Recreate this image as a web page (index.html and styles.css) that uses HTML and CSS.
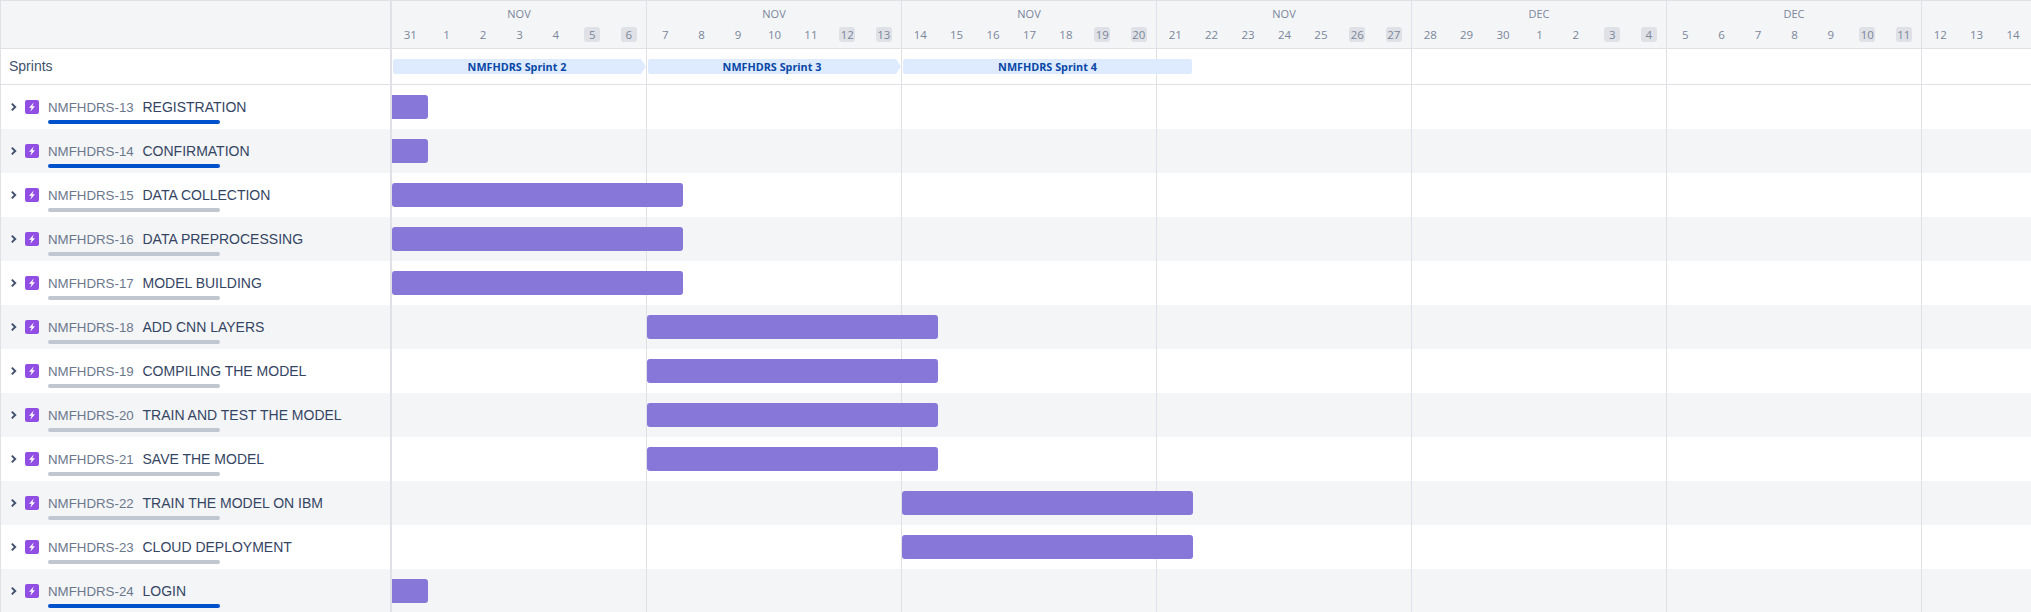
FILE: index.html
```html
<!DOCTYPE html>
<html>
<head>
    <title>Roadmap</title>
    <meta charset="utf-8" />
    <link rel="stylesheet" href="styles.css">
</head>
<body>
    <svg class="defs" width="0" height="0">
        <symbol id="epic" viewBox="0 0 14 14">
            <rect width="14" height="14" rx="2" fill="#904ee2"/>
            <path d="M8.8 2.4 4 7.8h2.6l-1.3 3.9 4.7-5.5H7.4z" fill="#fff"/>
        </symbol>
        <symbol id="chev" viewBox="0 0 8 10">
            <path d="M1.8 1.6 5.2 5 1.8 8.4" fill="none" stroke="#42526e" stroke-width="2"/>
        </symbol>
    </svg>

    <div class="header row">
        <div class="side"></div>
        <div class="weeks">
            <div class="week"><div class="month">NOV</div><div class="days"><span>31</span><span>1</span><span>2</span><span>3</span><span>4</span><span class="off"><b>5</b></span><span class="off"><b>6</b></span></div></div>
            <div class="week"><div class="month">NOV</div><div class="days"><span>7</span><span>8</span><span>9</span><span>10</span><span>11</span><span class="off"><b>12</b></span><span class="off"><b>13</b></span></div></div>
            <div class="week"><div class="month">NOV</div><div class="days"><span>14</span><span>15</span><span>16</span><span>17</span><span>18</span><span class="off"><b>19</b></span><span class="off"><b>20</b></span></div></div>
            <div class="week"><div class="month">NOV</div><div class="days"><span>21</span><span>22</span><span>23</span><span>24</span><span>25</span><span class="off"><b>26</b></span><span class="off"><b>27</b></span></div></div>
            <div class="week"><div class="month">DEC</div><div class="days"><span>28</span><span>29</span><span>30</span><span>1</span><span>2</span><span class="off"><b>3</b></span><span class="off"><b>4</b></span></div></div>
            <div class="week"><div class="month">DEC</div><div class="days"><span>5</span><span>6</span><span>7</span><span>8</span><span>9</span><span class="off"><b>10</b></span><span class="off"><b>11</b></span></div></div>
            <div class="week tail"><div class="month"></div><div class="days"><span>12</span><span>13</span><span>14</span></div></div>
        </div>
    </div>

    <div class="sprints row">
        <div class="side">Sprints</div>
        <div class="chart sprint-track">
            <div class="sprint arrow">NMFHDRS Sprint 2</div>
            <div class="sprint arrow">NMFHDRS Sprint 3</div>
            <div class="sprint last">NMFHDRS Sprint 4</div>
        </div>
    </div>

    <div class="row issue">
        <div class="side"><svg class="chev"><use href="#chev"/></svg><svg class="epic"><use href="#epic"/></svg><div class="info"><div class="names"><span class="key">NMFHDRS-13</span><span class="name">REGISTRATION</span></div><div class="progress done"></div></div></div>
        <div class="chart"><div class="bar first" style="grid-column: 1 / span 1"></div></div>
    </div>
    <div class="row issue">
        <div class="side"><svg class="chev"><use href="#chev"/></svg><svg class="epic"><use href="#epic"/></svg><div class="info"><div class="names"><span class="key">NMFHDRS-14</span><span class="name">CONFIRMATION</span></div><div class="progress done"></div></div></div>
        <div class="chart"><div class="bar first" style="grid-column: 1 / span 1"></div></div>
    </div>
    <div class="row issue">
        <div class="side"><svg class="chev"><use href="#chev"/></svg><svg class="epic"><use href="#epic"/></svg><div class="info"><div class="names"><span class="key">NMFHDRS-15</span><span class="name">DATA COLLECTION</span></div><div class="progress"></div></div></div>
        <div class="chart"><div class="bar" style="grid-column: 1 / span 8"></div></div>
    </div>
    <div class="row issue">
        <div class="side"><svg class="chev"><use href="#chev"/></svg><svg class="epic"><use href="#epic"/></svg><div class="info"><div class="names"><span class="key">NMFHDRS-16</span><span class="name">DATA PREPROCESSING</span></div><div class="progress"></div></div></div>
        <div class="chart"><div class="bar" style="grid-column: 1 / span 8"></div></div>
    </div>
    <div class="row issue">
        <div class="side"><svg class="chev"><use href="#chev"/></svg><svg class="epic"><use href="#epic"/></svg><div class="info"><div class="names"><span class="key">NMFHDRS-17</span><span class="name">MODEL BUILDING</span></div><div class="progress"></div></div></div>
        <div class="chart"><div class="bar" style="grid-column: 1 / span 8"></div></div>
    </div>
    <div class="row issue">
        <div class="side"><svg class="chev"><use href="#chev"/></svg><svg class="epic"><use href="#epic"/></svg><div class="info"><div class="names"><span class="key">NMFHDRS-18</span><span class="name">ADD CNN LAYERS</span></div><div class="progress"></div></div></div>
        <div class="chart"><div class="bar" style="grid-column: 8 / span 8"></div></div>
    </div>
    <div class="row issue">
        <div class="side"><svg class="chev"><use href="#chev"/></svg><svg class="epic"><use href="#epic"/></svg><div class="info"><div class="names"><span class="key">NMFHDRS-19</span><span class="name">COMPILING THE MODEL</span></div><div class="progress"></div></div></div>
        <div class="chart"><div class="bar" style="grid-column: 8 / span 8"></div></div>
    </div>
    <div class="row issue">
        <div class="side"><svg class="chev"><use href="#chev"/></svg><svg class="epic"><use href="#epic"/></svg><div class="info"><div class="names"><span class="key">NMFHDRS-20</span><span class="name">TRAIN AND TEST THE MODEL</span></div><div class="progress"></div></div></div>
        <div class="chart"><div class="bar" style="grid-column: 8 / span 8"></div></div>
    </div>
    <div class="row issue">
        <div class="side"><svg class="chev"><use href="#chev"/></svg><svg class="epic"><use href="#epic"/></svg><div class="info"><div class="names"><span class="key">NMFHDRS-21</span><span class="name">SAVE THE MODEL</span></div><div class="progress"></div></div></div>
        <div class="chart"><div class="bar" style="grid-column: 8 / span 8"></div></div>
    </div>
    <div class="row issue">
        <div class="side"><svg class="chev"><use href="#chev"/></svg><svg class="epic"><use href="#epic"/></svg><div class="info"><div class="names"><span class="key">NMFHDRS-22</span><span class="name">TRAIN THE MODEL ON IBM</span></div><div class="progress"></div></div></div>
        <div class="chart"><div class="bar" style="grid-column: 15 / span 8"></div></div>
    </div>
    <div class="row issue">
        <div class="side"><svg class="chev"><use href="#chev"/></svg><svg class="epic"><use href="#epic"/></svg><div class="info"><div class="names"><span class="key">NMFHDRS-23</span><span class="name">CLOUD DEPLOYMENT</span></div><div class="progress"></div></div></div>
        <div class="chart"><div class="bar" style="grid-column: 15 / span 8"></div></div>
    </div>
    <div class="row issue">
        <div class="side"><svg class="chev"><use href="#chev"/></svg><svg class="epic"><use href="#epic"/></svg><div class="info"><div class="names"><span class="key">NMFHDRS-24</span><span class="name">LOGIN</span></div><div class="progress done"></div></div></div>
        <div class="chart"><div class="bar first" style="grid-column: 1 / span 1"></div></div>
    </div>
</body>
</html>
```

FILE: styles.css
```css
html, body {height: 100%; overflow: hidden;}
body {margin: 0; background: #fff; color: #344563; font-family: "Liberation Sans", Arial, sans-serif; font-size: 14px; border-top: 1px solid #dfe1e6; border-left: 1px solid #dfe1e6; box-sizing: border-box;}
.defs {position: absolute;}

.row {display: flex;}
.side {flex: none; width: 389px; border-right: 2px solid #dfe1e6;}

.header {height: 47px; background: #f4f5f7; border-bottom: 1px solid #dfe1e6;}
.weeks {display: flex; flex: 1; min-width: 0;}
.week {flex: none; width: 255px; box-sizing: border-box; border-right: 1px solid #dfe1e6;}
.week.tail {flex: 1; width: auto; border-right: none;}
.month {height: 26px; line-height: 26px; text-align: center; font-family: "Open Sans", sans-serif; font-size: 11px; color: #7a869a;}
.days {display: flex; height: 15px;}
.days span {flex: none; width: 36.43px; text-align: center; font-family: "Open Sans", sans-serif; font-size: 11.5px; line-height: 15px; color: #7a869a;}
.days b {display: inline-block; min-width: 16px; height: 15px; font-weight: normal; background: #dfe1e6; border-radius: 3px;}

.sprints {height: 35px; border-bottom: 1px solid #dfe1e6;}
.sprints .side {line-height: 34px; padding-left: 8px; width: 381px; font-size: 14px; color: #42526e;}
.chart {flex: 1; min-width: 0; overflow: hidden; background-image: repeating-linear-gradient(to right, transparent 0 254px, #dfe1e6 254px 255px);}
.sprint-track {display: flex; gap: 2px; padding: 10px 0 0 1px; box-sizing: border-box; background-color: #fff;}
.sprint {flex: none; height: 15px; line-height: 15px; text-align: center; font-family: "Open Sans", sans-serif; font-size: 10.8px; font-weight: 700; color: #0747a6; background: #deebff; border-radius: 2px;}
.arrow {width: 253px; padding-right: 5px; box-sizing: border-box; clip-path: polygon(0 0, 248px 0, 253px 50%, 248px 100%, 0 100%);}
.last {width: 289px;}

.issue {height: 44px;}
.issue:nth-child(even) {background: #fff;}
.issue:nth-child(odd) {background: #f4f5f7;}
.issue .side {display: flex; align-items: flex-start; padding-left: 9px; width: 380px;}
.chev {flex: none; width: 8px; height: 10px; margin-top: 17px;}
.epic {flex: none; width: 14px; height: 14px; margin: 15px 0 0 7px;}
.info {width: 172px; margin-left: 9px; padding-top: 12px;}
.names {display: flex; height: 23px; white-space: nowrap; line-height: 20px;}
.key {flex: none; width: 94.5px; font-size: 13.3px; line-height: 22px; color: #6b778c;}
.name {color: #344563;}
.progress {height: 4px; border-radius: 2px; background: #c1c7d0;}
.progress.done {background: #0052cc;}

.issue .chart {display: grid; grid-template-columns: repeat(44, 36.43px); align-items: start; padding-top: 10px; box-sizing: border-box;}
.bar {height: 24px; background: #8777d9; border-radius: 3px;}
.bar.first {border-radius: 0 3px 3px 0;}
```
